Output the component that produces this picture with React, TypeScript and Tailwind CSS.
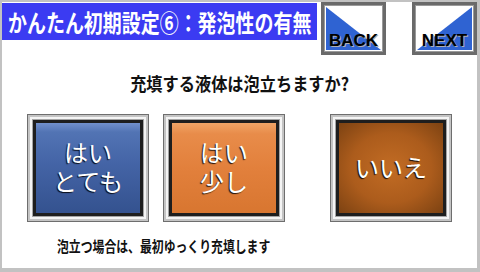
import React from 'react';

// Setup wizard step 6: foaming liquid yes/no.

const JP = "font-[family-name:'Noto_Sans_CJK_JP',sans-serif]";

const NavButton: React.FC<{ label: string; dir: 'back' | 'next' }> = ({ label, dir }) => (
  <div className="relative h-[53px] w-[65px] border-[3px] border-[#6a6a6a] bg-white shadow-[inset_0_0_0_1px_#9a9a9a]">
    <div
      className={
        dir === 'back'
          ? 'absolute inset-[2px] bg-[#2f63d2] [clip-path:polygon(0_0,0_100%,100%_100%)]'
          : 'absolute inset-[2px] bg-[#2f63d2] [clip-path:polygon(100%_0,100%_100%,0_100%)]'
      }
    />
    <div className="absolute inset-x-0 bottom-[2px] text-center font-['Liberation_Sans',Arial,sans-serif] text-[17px] leading-[18px] font-bold text-black [text-shadow:1px_1px_0_#b0b0b0]">
      {label}
    </div>
  </div>
);

const ChoiceButton: React.FC<{ face: string; lines: string[] }> = ({ face, lines }) => (
  <div className="h-[108px] w-[122px] border border-[#6e6e6e] bg-[#c4c4c4] p-[2px]">
    <div className="h-full w-full bg-[#f4f4f4] p-[2px]">
      <div className="h-full w-full bg-[#a4a4a4] p-px">
        <div
          className={`flex h-full w-full flex-col items-center justify-center border-[3px] border-[#1e1e1e] ${face}`}
        >
          {lines.map((line) => (
            <div
              key={line}
              className="font-[family-name:'Liberation_Sans','Noto_Sans_CJK_JP',sans-serif] text-[24px] leading-[29px] font-normal text-white [text-shadow:-1px_1px_1px_rgba(0,0,0,0.85)]"
            >
              {line}
            </div>
          ))}
        </div>
      </div>
    </div>
  </div>
);

export default function App() {
  return (
    <div className={`h-[272px] w-[480px] bg-[#c2c2c2] pt-[2px] pr-[3px] pb-[4px] pl-[2px] ${JP}`}>
      <div className="flex h-full w-full flex-col bg-white">
        <div className="flex items-start">
          <div className="mt-px flex h-[37px] w-[315px] items-center overflow-hidden bg-[#3b3bf2] pl-[6px]">
            <span className="inline-block origin-left scale-x-[0.79] whitespace-nowrap text-[24px] leading-[28px] font-bold text-white">
              かんたん初期設定⑥：発泡性の有無
            </span>
          </div>
          <div className="ml-[4px]">
            <NavButton label="BACK" dir="back" />
          </div>
          <div className="ml-[26px]">
            <NavButton label="NEXT" dir="next" />
          </div>
        </div>

        <div className="mt-[17px] text-center">
          <span className="inline-block scale-x-[0.9] whitespace-nowrap text-[18px] leading-[20px] font-bold text-[#111]">
            充填する液体は泡立ちますか?
          </span>
        </div>

        <div className="mt-[18px] flex pl-[25px]">
          <ChoiceButton
            face="bg-[linear-gradient(180deg,#7290cc_0%,#5274b4_10%,#4464a6_45%,#34528f_100%)]"
            lines={['はい', 'とても']}
          />
          <div className="ml-[14px]">
            <ChoiceButton
              face="bg-[linear-gradient(180deg,#f0a466_0%,#e88c4a_12%,#e2803c_50%,#d87630_100%)]"
              lines={['はい', '少し']}
            />
          </div>
          <div className="ml-[45px]">
            <ChoiceButton
              face="bg-[radial-gradient(ellipse_at_center,#c26c24_0%,#ac5c1c_55%,#7c4212_100%)]"
              lines={['いいえ']}
            />
          </div>
        </div>

        <div className="mt-[11px] pl-[55px]">
          <span className="inline-block origin-left scale-x-[0.79] whitespace-nowrap text-[15px] leading-[20px] font-bold text-[#111]">
            泡立つ場合は、最初ゆっくり充填します
          </span>
        </div>
      </div>
    </div>
  );
}
